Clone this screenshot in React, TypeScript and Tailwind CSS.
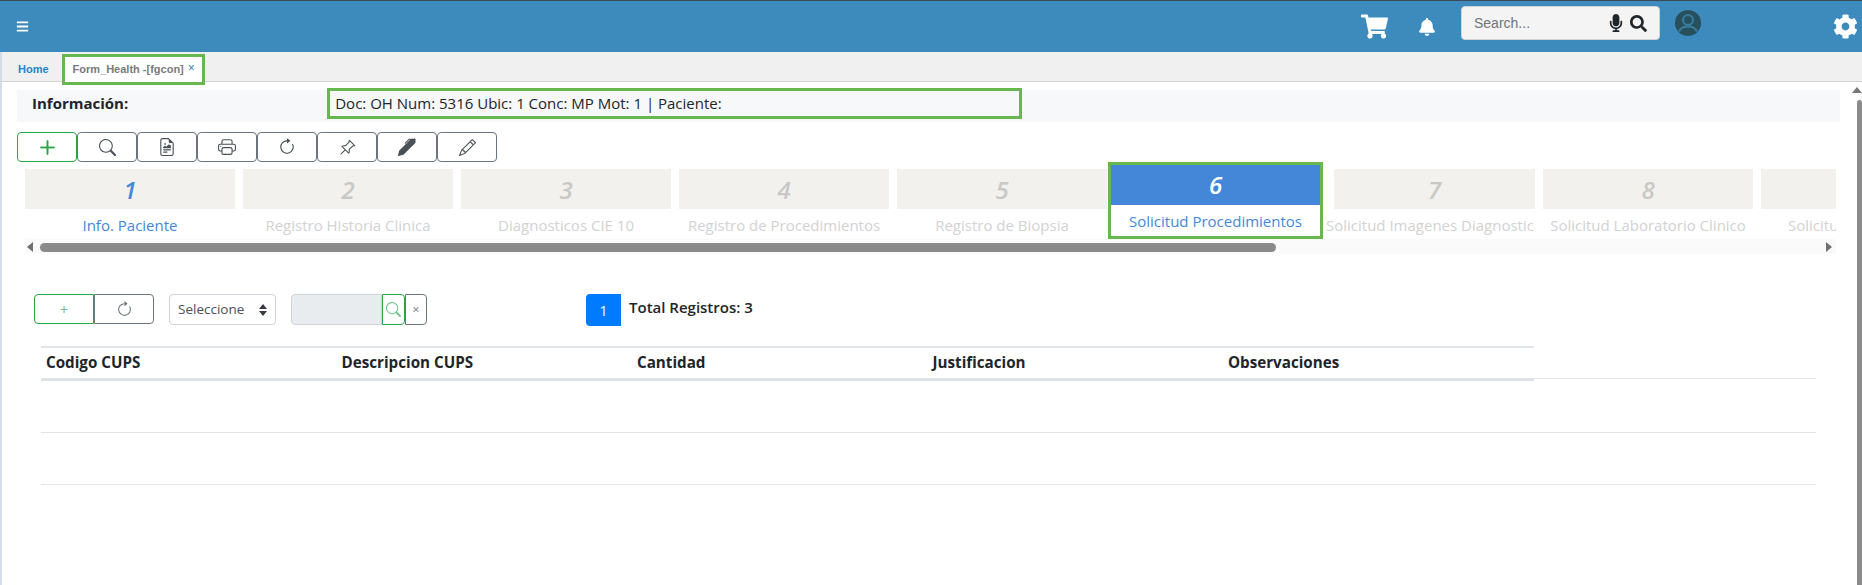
import {
  BsArrowClockwise,
  BsFileEarmarkRichtext,
  BsPencil,
  BsPenFill,
  BsPinAngle,
  BsPlusLg,
  BsPrinter,
  BsSearch,
} from "react-icons/bs";
import {
  FaBars,
  FaBell,
  FaCog,
  FaMicrophone,
  FaSearch,
  FaShoppingCart,
} from "react-icons/fa";

const steps = [
  { n: "1", label: "Info. Paciente", cls: "w-[210px] mr-2 mt-[7px]", on: true },
  { n: "2", label: "Registro Historia Clinica", cls: "w-[210px] mr-2 mt-[7px]" },
  { n: "3", label: "Diagnosticos CIE 10", cls: "w-[210px] mr-2 mt-[7px]" },
  { n: "4", label: "Registro de Procedimientos", cls: "w-[210px] mr-2 mt-[7px]" },
  { n: "5", label: "Registro de Biopsia", cls: "w-[210px] mr-[1px] mt-[7px]" },
];

const laterSteps = [
  {
    n: "7",
    label: "Solicitud Imagenes Diagnosticas",
    cls: "w-[201px] mr-2 mt-[7px]",
    labelCls: "-ml-[8px] justify-start",
  },
  { n: "8", label: "Solicitud Laboratorio Clinico", cls: "w-[210px] mr-2 mt-[7px]" },
  { n: "9", label: "Solicitud Interconsulta", cls: "w-[210px] mt-[7px]" },
];

const toolIcons = [
  <BsSearch key="search" className="text-[17px]" />,
  <BsFileEarmarkRichtext key="doc" className="text-[18px]" />,
  <BsPrinter key="print" className="text-[18px]" />,
  <BsArrowClockwise key="reload" className="text-[18px]" />,
  <BsPinAngle key="pin" className="text-[17px]" />,
  <BsPenFill key="pen" className="text-[18px]" />,
  <BsPencil key="pencil" className="text-[17px]" />,
];

const columns = [
  "Codigo CUPS",
  "Descripcion CUPS",
  "Cantidad",
  "Justificacion",
  "Observaciones",
];

function Step({
  n,
  label,
  cls,
  on,
  labelCls = "justify-center",
}: {
  n: string;
  label: string;
  cls: string;
  on?: boolean;
  labelCls?: string;
}) {
  return (
    <div className={`${cls} shrink-0`}>
      <div
        className={`h-10 pt-[2px] bg-[#f2f1ed] flex items-center justify-center text-[24px] font-semibold italic ${
          on ? "text-[#4487d9]" : "text-[#c8c8c6]"
        }`}
      >
        {n}
      </div>
      <div
        className={`${labelCls} h-[30px] pt-[2px] flex items-center text-[15px] whitespace-nowrap overflow-hidden ${
          on ? "text-[#4487d9]" : "text-[#d2d2d2]"
        }`}
      >
        {label}
      </div>
    </div>
  );
}

export default function App() {
  return (
    <div className="h-[585px] w-[1862px] overflow-hidden flex flex-col bg-white font-['Open_Sans',sans-serif] text-[#212529]">
      <header className="h-[52px] shrink-0 border-t border-[#3b4a55] bg-[#3d8bbd] flex items-center text-white">
        <FaBars className="ml-[16px] text-[13px]" />
        <FaShoppingCart className="ml-[1332px] text-[27px]" />
        <FaBell className="ml-[30px] text-[18px]" />
        <div className="ml-[25px] -mt-[7px] w-[199px] h-[34px] rounded bg-[#f4f4f4] border border-[#cfd4d8] flex items-center pl-3 text-[#212529]">
          <span className="font-['Liberation_Sans',sans-serif] text-[14px] text-[#6f757b] grow">Search...</span>
          <FaMicrophone className="text-[18px]" />
          <FaSearch className="ml-[5px] mr-3 text-[17px]" />
        </div>
        <svg viewBox="0 0 26 26" className="ml-[15px] -mt-[7px] w-[26px] h-[26px]">
          <circle cx="13" cy="13" r="13" fill="#27505f" />
          <circle cx="13" cy="10" r="5" fill="none" stroke="#3a7d9e" strokeWidth="2" />
          <path d="M4 21.500c2-4 5.500-5 9-5s7 1 9 5" fill="none" stroke="#3a7d9e" strokeWidth="2" />
        </svg>
        <FaCog className="ml-[132px] text-[25px]" />
      </header>

      <div className="h-[30px] shrink-0 bg-[#f0f0f0] border-b border-[#d3d3d3] border-l-2 border-l-[#d4dbe9] flex items-start font-['Liberation_Sans',sans-serif] text-[11px] font-bold">
        <span className="ml-[16px] mt-[9px] text-[#1b86c8]">Home</span>
        <div className="ml-[13px] mt-[2px] w-[143px] h-[31px] shrink-0 border-[3px] border-[#66b84e] bg-white flex items-center pl-[8px] text-[#7a7a7a] relative">
          Form_Health -[fgcon]
          <span className="ml-[4px] -mt-[3px] text-[12px] font-normal text-[#3f80b0]">×</span>
        </div>
      </div>

      <main className="relative grow min-h-0 border-l-2 border-[#d4dbe9]">
        <section className="mt-2 ml-[15px] w-[1823px] h-8 bg-[#f7f8fa] flex items-start">
          <span className="ml-[15px] mt-[2px] text-[15px] font-bold">Información:</span>
          <div className="ml-[199px] -mt-[2px] w-[695px] h-[31px] border-[3px] border-[#66b84e] flex items-center pl-[5px] text-[15px]">
            Doc: OH Num: 5316 Ubic: 1 Conc: MP Mot: 1 | Paciente:
          </div>
        </section>

        <div className="mt-[10px] ml-[15px] flex h-[30px]">
          <button className="w-[60px] rounded border border-[#28a745] flex items-center justify-center text-[#28a745]">
            <BsPlusLg className="text-[19px] stroke-[0.6px]" />
          </button>
          {toolIcons.map((icon, i) => (
            <button
              key={i}
              className="w-[60px] rounded border border-[#6c757d] flex items-center justify-center text-[#4a5057]"
            >
              {icon}
            </button>
          ))}
        </div>

        <div className="ml-[23px] w-[1811px] overflow-hidden flex items-start h-[77px]">
          {steps.map((s) => (
            <Step key={s.n} {...s} />
          ))}
          <div className="w-[215px] h-[77px] shrink-0 mr-[11px] border-[3px] border-[#66b84e] bg-white">
            <div className="h-10 bg-[#4487d9] flex items-center justify-center text-white text-[24px] font-semibold italic">
              6
            </div>
            <div className="h-[31px] pt-[1px] flex items-center justify-center text-[15px] text-[#4487d9] whitespace-nowrap">
              Solicitud Procedimientos
            </div>
          </div>
          {laterSteps.map((s) => (
            <Step key={s.n} {...s} />
          ))}
        </div>

        <div className="ml-[23px] w-[1811px] h-[15px] bg-[#fafafa] flex items-center pt-[1px]">
          <div className="w-0 h-0 ml-[2px] border-y-[5px] border-y-transparent border-r-[6px] border-r-[#6f6f6f]" />
          <div className="ml-[7px] w-[1236px] h-[9px] rounded-full bg-[#8a8a8a]" />
          <div className="ml-auto mr-[4px] w-0 h-0 border-y-[5px] border-y-transparent border-l-[6px] border-l-[#6f6f6f]" />
        </div>

        <div className="mt-[40px] ml-[32px] flex items-start h-[32px]">
          <button className="w-[60px] h-[30px] rounded-l border border-[#28a745] text-[#6fb98a] text-[14px]">+</button>
          <button className="w-[60px] h-[30px] rounded-r border border-[#6c757d] flex items-center justify-center text-[#6c757d]">
            <BsArrowClockwise className="text-[17px]" />
          </button>
          <div className="ml-[15px] w-[107px] h-[31px] rounded border border-[#ced4da] flex items-center pl-2 pr-[8px] text-[13.5px] text-[#495057]">
            <span className="grow">Seleccione</span>
            <svg width="8" height="12" viewBox="0 0 8 12" fill="#343a40">
              <path d="M4 0 8 5H0zM4 12 0 7h8z" />
            </svg>
          </div>
          <div className="ml-[15px] w-[91px] h-[31px] rounded-l border border-[#ced4da] bg-[#e9ecef]" />
          <button className="w-[23px] h-[31px] border border-[#28a745] rounded-r flex items-center justify-center text-[#6fc28a]">
            <BsSearch className="text-[15px]" />
          </button>
          <button className="w-[22px] h-[31px] border border-[#6c757d] rounded-r flex items-center justify-center text-[12px] text-[#6c757d]">
            ×
          </button>
          <div className="ml-[159px] w-[35px] h-[32px] rounded-l bg-[#007bff] text-white text-[14px] flex items-center justify-center">
            1
          </div>
          <span className="ml-2 mt-[2px] text-[15px] font-semibold">Total Registros: 3</span>
        </div>

        <div className="mt-[20px] ml-[39px] w-[1775px]">
          <div className="w-[1493px] h-[32px] pb-[2px] border-t-2 border-[#e1e4e8] flex items-center text-[15.2px] font-bold pl-[5px]">
            {columns.map((c) => (
              <span key={c} className="w-[295.5px] shrink-0">
                {c}
              </span>
            ))}
          </div>
          <div className="flex h-[3px]">
            <div className="w-[1493px] bg-[#dee2e6]" />
            <div className="grow border-t border-[#e1e4e8]" />
          </div>
          <div className="h-[52px] border-b border-[#e1e4e8]" />
          <div className="h-[52px] border-b border-[#e1e4e8]" />
        </div>

        {/* page scrollbar, sits over the content */}
        <div className="absolute right-0 top-[18px] bottom-0 w-[5px] bg-[#8a8a8a] rounded-t" />
        <div className="absolute right-0 top-[5px] w-0 h-0 border-x-[5px] border-x-transparent border-b-[6px] border-b-[#777]" />
      </main>
    </div>
  );
}
